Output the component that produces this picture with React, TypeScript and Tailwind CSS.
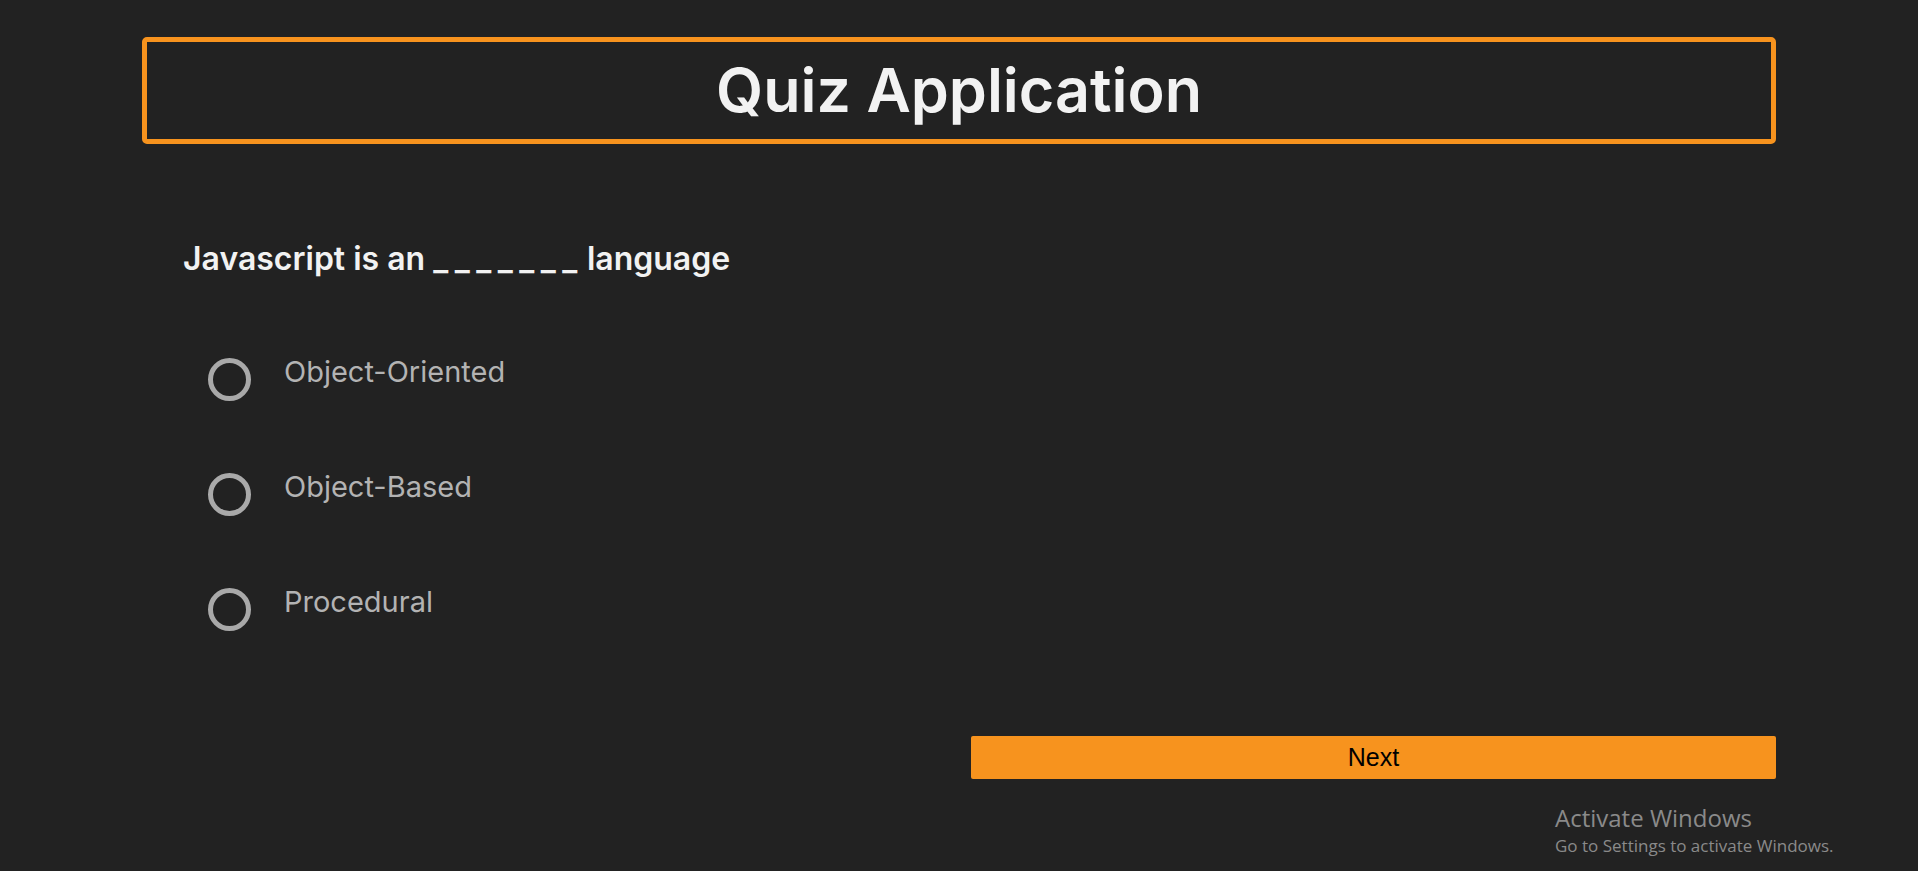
const options = ["Object-Oriented", "Object-Based", "Procedural"];

function Option({ label }: { label: string }) {
  return (
    <label className="flex items-start gap-[33px] cursor-pointer">
      <span className="block w-[43px] h-[43px] shrink-0 rounded-full border-[5px] border-[#a9a9a9]" />
      <span className="-mt-[4px] text-[29px] leading-[36px] text-[#b3b3b3]">{label}</span>
    </label>
  );
}

export default function App() {
  return (
    <div className="relative min-h-screen bg-[#222222] font-['Inter',sans-serif]">
      <div className="mx-auto w-[1634px] pt-[37px]">
        <header className="flex h-[107px] items-center justify-center rounded-[5px] border-[5px] border-[#f7931e]">
          <h1 className="text-[61px] font-semibold leading-none text-[#f2f2f2]">Quiz Application</h1>
        </header>

        <div className="pl-[41px]">
          <h2 className="mt-[97px] text-[32px] font-semibold leading-[36px] text-[#f2f2f2]">
            Javascript is an <span className="-mr-[5px] tracking-[6.5px]">_______</span> language
          </h2>
          <div className="mt-[81px] flex flex-col gap-[72px] pl-[25px]">
            {options.map((o) => (
              <Option key={o} label={o} />
            ))}
          </div>
        </div>

        <div className="mt-[105px] flex justify-end">
          <button className="h-[43px] w-[805px] rounded-[2px] bg-[#f7931e] font-['Liberation_Sans',sans-serif] text-[25px] text-black">
            Next
          </button>
        </div>
      </div>

      <div className="absolute left-[1555px] top-[803px] font-['Open_Sans',sans-serif] text-[#8a8a8a]">
        <div className="text-[24px] leading-[30px]">Activate Windows</div>
        <div className="text-[17px] leading-[26px]">Go to Settings to activate Windows.</div>
      </div>
    </div>
  );
}
